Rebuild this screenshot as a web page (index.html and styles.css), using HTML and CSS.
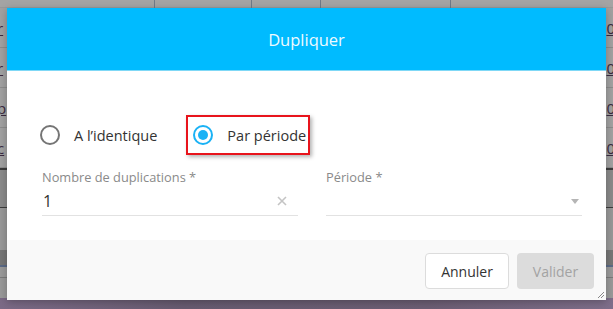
FILE: index.html
```html
<!DOCTYPE html>
<html>
<head>
    <title>Dupliquer</title>
    <meta charset="UTF-8">
    <link rel="stylesheet" href="styles.css">
</head>
<body>
    <div class="page">
        <div class="row row-head">
            <span class="col c1"></span><span class="col c2"></span><span class="col c3"></span><span class="col c4"></span>
        </div>
        <div class="row"><span class="cell-l">r</span><span class="cell-r">0</span></div>
        <div class="row"><span class="cell-l">r</span><span class="cell-r">0</span></div>
        <div class="row"><span class="cell-l">p</span><span class="cell-r">0</span></div>
        <div class="row"><span class="cell-l">c</span><span class="cell-r">0</span></div>
        <div class="row row-thick"></div>
        <div class="row row-plain"></div>
        <div class="row row-band"></div>
        <div class="row row-low"></div>
        <div class="row row-last"></div>
        <div class="page-bottom"></div>
    </div>

    <div class="dialog">
        <div class="dialog-header">Dupliquer</div>
        <div class="dialog-body">
            <div class="choices">
                <label class="choice">
                    <span class="radio"></span>
                    <span class="choice-text">A l’identique</span>
                </label>
                <label class="choice choice-marked">
                    <span class="radio radio-on"><span class="dot"></span></span>
                    <span class="choice-text">Par période</span>
                </label>
            </div>
            <div class="fields">
                <div class="field">
                    <div class="field-label">Nombre de duplications *</div>
                    <div class="field-input">
                        <span class="field-value">1</span>
                        <svg class="clear" width="10" height="10" viewBox="0 0 10 10">
                            <path d="M1 1 L9 9 M9 1 L1 9" stroke="#c4c4c4" stroke-width="1.6" fill="none"/>
                        </svg>
                    </div>
                </div>
                <div class="field">
                    <div class="field-label">Période *</div>
                    <div class="field-input">
                        <span class="field-value"></span>
                        <span class="caret"></span>
                    </div>
                </div>
            </div>
        </div>
        <div class="dialog-footer">
            <button class="btn btn-cancel">Annuler</button>
            <button class="btn btn-ok" disabled>Valider</button>
        </div>
        <svg class="grip" width="8" height="8" viewBox="0 0 8 8">
            <path d="M7 1 L1 7 M7 4 L4 7" stroke="#888" stroke-width="1" fill="none"/>
        </svg>
    </div>
</body>
</html>
```

FILE: styles.css
```css
body {
    margin: 0;
    font-family: "Open Sans", Arial, sans-serif;
    background-color: #9d9d9d;
    overflow: hidden;
}
.page {
    width: 613px;
    height: 309px;
    display: flex;
    flex-direction: column;
}
.row {
    height: 40px;
    flex: none;
    border-bottom: 1px solid #8c8c8c;
    display: flex;
    justify-content: space-between;
    align-items: center;
    background-color: #a1a1a1;
    box-sizing: border-box;
    font-size: 15px;
    color: #3a2a40;
}
.row-head {
    height: 8px;
    display: block;
    position: relative;
    background-color: #a4a4a4;
    border-bottom: 1px solid #999;
}
.col {
    position: absolute;
    top: 0;
    height: 8px;
    border-left: 1px solid #6f7a88;
}
.c1 { left: 154px; }
.c2 { left: 251px; }
.c3 { left: 320px; }
.c4 { left: 450px; }
.cell-l {
    margin-left: -3px;
    text-decoration: underline;
}
.cell-r {
    margin-right: -2px;
    text-decoration: underline;
}
.row-thick {
    border-top: 2px solid #3c3c3c;
    border-bottom: 1px solid #3c3c3c;
    background-color: #8a8a8a;
}
.row-plain {
    height: 42px;
    border-bottom: none;
    background-color: #989898;
}
.row-band {
    height: 17px;
    background-color: #767676;
    border-bottom: 2px solid #5b6a86;
}
.row-low {
    height: 11px;
    background-color: #9a9a9a;
    border-bottom: 1px solid #7a7a7a;
}
.row-last {
    height: 20px;
    border-bottom: none;
    background-color: #999;
}
.page-bottom {
    flex: 1;
    background: linear-gradient(90deg, #7b6a86, #675b70 30%, #6c5e74 70%, #7e6e8a);
}

.dialog {
    position: absolute;
    left: 7px;
    top: 8px;
    width: 599px;
    height: 292px;
    background-color: #fff;
    display: flex;
    flex-direction: column;
    box-shadow: 0 2px 8px rgba(0, 0, 0, 0.25);
}
.dialog-header {
    height: 63px;
    background-color: #00bbff;
    color: #eefaff;
    font-size: 16.5px;
    display: flex;
    align-items: center;
    justify-content: center;
    border-bottom: 1px solid #7fd8f6;
    box-sizing: border-box;
}
.dialog-body {
    flex: 1;
    padding: 44px 24px 0 35px;
}
.choices {
    display: flex;
    align-items: center;
    height: 40px;
}
.choice {
    display: flex;
    align-items: center;
    font-size: 14.5px;
    color: #333;
}
.radio {
    width: 20px;
    height: 20px;
    border: 2px solid #757575;
    border-radius: 50%;
    box-sizing: border-box;
    display: flex;
    align-items: center;
    justify-content: center;
    margin-left: -2px;
}
.radio-on {
    border-color: #1ab2f5;
    margin-left: 0;
}
.dot {
    width: 10px;
    height: 10px;
    border-radius: 50%;
    background-color: #1ab2f5;
}
.choice-text {
    margin-left: 14px;
}
.choice-marked {
    margin-left: 29px;
    height: 40px;
    box-sizing: border-box;
    padding: 0 2px 0 5px;
    border: 2px solid #e8141c;
    box-shadow: 2px 2px 4px rgba(0, 0, 0, 0.3);
}
.fields {
    display: flex;
    gap: 28px;
    margin-top: 14px;
}
.field {
    width: 256px;
}
.field-label {
    font-size: 12.8px;
    color: #8a8a8a;
    line-height: 17px;
}
.field-input {
    height: 30px;
    border-bottom: 1px solid #e2e2e2;
    display: flex;
    align-items: center;
    justify-content: space-between;
    box-sizing: border-box;
}
.field-value {
    font-size: 16px;
    color: #333;
    padding-left: 1px;
}
.clear {
    margin-right: 11px;
}
.caret {
    width: 0;
    height: 0;
    border-left: 4.5px solid transparent;
    border-right: 4.5px solid transparent;
    border-top: 5px solid #b5b5b5;
    margin-right: 3px;
    margin-top: 2px;
}
.dialog-footer {
    height: 60px;
    background-color: #f9f9f9;
    display: flex;
    justify-content: flex-end;
    align-items: flex-start;
    gap: 8px;
    padding: 13px 12px 0 0;
    box-sizing: border-box;
}
.btn {
    height: 36px;
    font-family: "Open Sans", Arial, sans-serif;
    font-size: 14px;
    border-radius: 4px;
    padding: 0;
}
.btn-cancel {
    width: 84px;
    background-color: #fff;
    border: 1px solid #dcdcdc;
    color: #333;
}
.btn-ok {
    width: 77px;
    background-color: #dcdcdc;
    border: none;
    color: #a3a3a3;
}
.grip {
    position: absolute;
    right: 1px;
    bottom: 1px;
}
```
